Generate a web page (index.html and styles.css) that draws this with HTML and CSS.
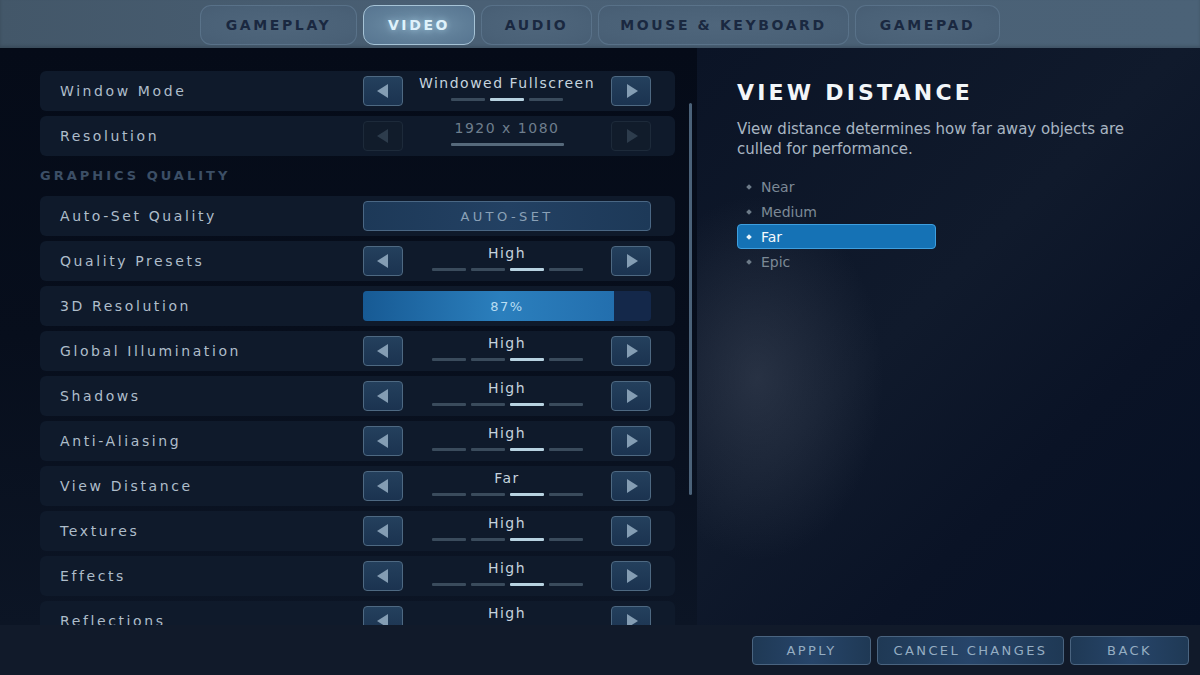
FILE: index.html
```html
<!DOCTYPE html>
<html>
<head>
    <title>Video Settings</title>
    <link rel="stylesheet" href="styles.css">
</head>
<body>
<div class="screen">
    <div class="tabs">
        <div class="tab tab-gameplay">GAMEPLAY</div>
        <div class="tab tab-video active">VIDEO</div>
        <div class="tab tab-audio">AUDIO</div>
        <div class="tab tab-mk">MOUSE &amp; KEYBOARD</div>
        <div class="tab tab-pad">GAMEPAD</div>
    </div>

    <div class="main">
        <div class="settings">
            <div class="list">
                <div class="row">
                    <span class="label">Window Mode</span>
                    <div class="picker">
                        <div class="arrow left"></div>
                        <div class="value">
                            <span>Windowed Fullscreen</span>
                            <div class="ticks"><i></i><i class="on"></i><i></i></div>
                        </div>
                        <div class="arrow right"></div>
                    </div>
                </div>
                <div class="row">
                    <span class="label">Resolution</span>
                    <div class="picker disabled">
                        <div class="arrow left"></div>
                        <div class="value">
                            <span>1920 x 1080</span>
                            <div class="ticks"><i class="full"></i></div>
                        </div>
                        <div class="arrow right"></div>
                    </div>
                </div>

                <div class="section">GRAPHICS QUALITY</div>

                <div class="row">
                    <span class="label">Auto-Set Quality</span>
                    <div class="autoset">AUTO-SET</div>
                </div>
                <div class="row">
                    <span class="label">Quality Presets</span>
                    <div class="picker">
                        <div class="arrow left"></div>
                        <div class="value">
                            <span>High</span>
                            <div class="ticks"><i></i><i></i><i class="on"></i><i></i></div>
                        </div>
                        <div class="arrow right"></div>
                    </div>
                </div>
                <div class="row">
                    <span class="label">3D Resolution</span>
                    <div class="slider">
                        <div class="fill" style="width: 87%"></div>
                        <span>87%</span>
                    </div>
                </div>
                <div class="row">
                    <span class="label">Global Illumination</span>
                    <div class="picker">
                        <div class="arrow left"></div>
                        <div class="value">
                            <span>High</span>
                            <div class="ticks"><i></i><i></i><i class="on"></i><i></i></div>
                        </div>
                        <div class="arrow right"></div>
                    </div>
                </div>
                <div class="row">
                    <span class="label">Shadows</span>
                    <div class="picker">
                        <div class="arrow left"></div>
                        <div class="value">
                            <span>High</span>
                            <div class="ticks"><i></i><i></i><i class="on"></i><i></i></div>
                        </div>
                        <div class="arrow right"></div>
                    </div>
                </div>
                <div class="row">
                    <span class="label">Anti-Aliasing</span>
                    <div class="picker">
                        <div class="arrow left"></div>
                        <div class="value">
                            <span>High</span>
                            <div class="ticks"><i></i><i></i><i class="on"></i><i></i></div>
                        </div>
                        <div class="arrow right"></div>
                    </div>
                </div>
                <div class="row">
                    <span class="label">View Distance</span>
                    <div class="picker">
                        <div class="arrow left"></div>
                        <div class="value">
                            <span>Far</span>
                            <div class="ticks"><i></i><i></i><i class="on"></i><i></i></div>
                        </div>
                        <div class="arrow right"></div>
                    </div>
                </div>
                <div class="row">
                    <span class="label">Textures</span>
                    <div class="picker">
                        <div class="arrow left"></div>
                        <div class="value">
                            <span>High</span>
                            <div class="ticks"><i></i><i></i><i class="on"></i><i></i></div>
                        </div>
                        <div class="arrow right"></div>
                    </div>
                </div>
                <div class="row">
                    <span class="label">Effects</span>
                    <div class="picker">
                        <div class="arrow left"></div>
                        <div class="value">
                            <span>High</span>
                            <div class="ticks"><i></i><i></i><i class="on"></i><i></i></div>
                        </div>
                        <div class="arrow right"></div>
                    </div>
                </div>
                <div class="row">
                    <span class="label">Reflections</span>
                    <div class="picker">
                        <div class="arrow left"></div>
                        <div class="value">
                            <span>High</span>
                            <div class="ticks"><i></i><i></i><i class="on"></i><i></i></div>
                        </div>
                        <div class="arrow right"></div>
                    </div>
                </div>
            </div>
            <div class="scrollbar"></div>
        </div>

        <div class="info">
            <h2>VIEW DISTANCE</h2>
            <p>View distance determines how far away objects are culled for performance.</p>
            <ul class="options">
                <li>Near</li>
                <li>Medium</li>
                <li class="selected">Far</li>
                <li>Epic</li>
            </ul>
        </div>
    </div>

    <div class="footer">
        <div class="btn btn-apply">APPLY</div>
        <div class="btn btn-cancel">CANCEL CHANGES</div>
        <div class="btn btn-back">BACK</div>
    </div>
</div>
</body>
</html>
```

FILE: styles.css
```css
body {
    margin: 0;
    background: #050b18;
    font-family: "DejaVu Sans", "Liberation Sans", sans-serif;
    overflow: hidden;
}
.screen {
    width: 1200px;
    height: 675px;
    display: flex;
    flex-direction: column;
    background: #050b18;
}

/* tabs */
.tabs {
    height: 48px;
    box-sizing: border-box;
    display: flex;
    gap: 6px;
    padding: 5px 0 0 200px;
    background: linear-gradient(90deg, #435769 0%, #4a6075 40%, #4b6277 100%);
    box-shadow: inset 0 -2px 3px rgba(0,0,0,0.15);
}
.tab {
    height: 40px;
    box-sizing: border-box;
    display: flex;
    align-items: center;
    justify-content: center;
    border: 1px solid rgba(120,150,175,0.35);
    border-radius: 11px;
    background: radial-gradient(ellipse at center, #4f667c 0%, #4a6177 70%, #475d73 100%);
    color: #1a2840;
    font-size: 14px;
    font-weight: bold;
    letter-spacing: 2.6px;
}
.tab-gameplay { width: 157px; }
.tab-video { width: 112px; }
.tab-audio { width: 111px; }
.tab-mk { width: 251px; }
.tab-pad { width: 145px; }
.tab.active {
    background: radial-gradient(ellipse at center, #7595ae 0%, #5f7e98 60%, #567490 100%);
    border: 1px solid #a6c3d6;
    color: #dff2fb;
    text-shadow: 0 0 6px rgba(180,225,245,0.6);
}

/* main area */
.main {
    flex: 1;
    display: flex;
    min-height: 0;
}
.settings {
    width: 697px;
    display: flex;
    padding: 23px 0 0 40px;
    box-sizing: border-box;
    overflow: hidden;
    background: linear-gradient(180deg, #050b18 0%, #070e1c 50%, #0c1525 100%);
}
.list {
    width: 635px;
    flex-shrink: 0;
}
.scrollbar {
    width: 3px;
    height: 392px;
    margin: 32px 0 0 14px;
    border-radius: 2px;
    background: #4b6279;
}
.row {
    height: 40px;
    margin-bottom: 5px;
    display: flex;
    align-items: center;
    justify-content: space-between;
    padding: 0 24px 0 20px;
    border-radius: 6px;
    background: #0f1a2b;
}
.label {
    color: #aebdca;
    font-size: 14px;
    letter-spacing: 2.6px;
}
.section {
    height: 35px;
    box-sizing: border-box;
    padding-bottom: 6px;
    display: flex;
    align-items: center;
    color: #3c4f66;
    font-size: 13px;
    font-weight: bold;
    letter-spacing: 3px;
}

/* arrow pickers */
.picker {
    width: 288px;
    height: 30px;
    display: flex;
    justify-content: space-between;
}
.arrow {
    width: 40px;
    height: 30px;
    box-sizing: border-box;
    display: flex;
    align-items: center;
    justify-content: center;
    border: 1px solid #4e6982;
    border-radius: 4px;
    background: linear-gradient(180deg, #24405d 0%, #1b3350 100%);
}
.arrow::before {
    content: "";
    border-top: 7px solid transparent;
    border-bottom: 7px solid transparent;
}
.arrow.left::before {
    border-right: 11px solid #849db3;
    margin-right: 2px;
}
.arrow.right::before {
    border-left: 11px solid #849db3;
    margin-left: 2px;
}
.value {
    flex: 1;
    display: flex;
    flex-direction: column;
    align-items: center;
    color: #c5d3de;
    font-size: 14px;
    letter-spacing: 1.5px;
}
.value span {
    line-height: 20px;
    margin-top: -3px;
}
.ticks {
    display: flex;
    gap: 5px;
    margin-top: 5px;
}
.ticks i {
    width: 34px;
    height: 3px;
    border-radius: 1px;
    background: #3a4b5c;
}
.ticks i.on {
    background: #b7d2e0;
}
.ticks i.full {
    width: 113px;
    background: #56697b;
}
.picker.disabled .arrow {
    background: #111c2b;
    border-color: #1d2a3a;
}
.picker.disabled .arrow.left::before {
    border-right-color: #2d3c4c;
}
.picker.disabled .arrow.right::before {
    border-left-color: #2d3c4c;
}
.picker.disabled .value {
    color: #6e7e8d;
}

.autoset {
    width: 288px;
    height: 30px;
    box-sizing: border-box;
    display: flex;
    align-items: center;
    justify-content: center;
    border: 1px solid #4a6784;
    border-radius: 4px;
    background: linear-gradient(90deg, #1d3958 0%, #234163 50%, #1d3958 100%);
    color: #8aa1b7;
    font-size: 13px;
    letter-spacing: 3.4px;
}
.slider {
    width: 288px;
    height: 30px;
    position: relative;
    display: flex;
    align-items: center;
    justify-content: center;
    border-radius: 4px;
    background: #14284a;
    overflow: hidden;
}
.slider .fill {
    position: absolute;
    left: 0;
    top: 0;
    bottom: 0;
    background: linear-gradient(90deg, #175a94 0%, #2b7fbd 55%, #236fae 100%);
}
.slider span {
    position: relative;
    color: #b9ddf2;
    font-size: 13px;
    letter-spacing: 1.5px;
}

/* info panel */
.info {
    flex: 1;
    padding: 30px 40px 0 40px;
    background:
        radial-gradient(ellipse 180px 260px at 60px 330px, rgba(70,80,98,0.45), transparent 70%),
        linear-gradient(135deg, #0b1426 0%, #101a2c 45%, #0a1326 70%, #061024 100%);
}
.info h2 {
    margin: 0;
    color: #f2f6f9;
    font-size: 22px;
    font-weight: bold;
    letter-spacing: 3.2px;
    line-height: 30px;
}
.info p {
    margin: 11px 0 0 0;
    color: #a8b5c2;
    font-size: 15px;
    line-height: 20px;
}
.options {
    list-style: none;
    margin: 15px 0 0 0;
    padding: 0;
}
.options li {
    width: 199px;
    height: 25px;
    box-sizing: border-box;
    display: flex;
    align-items: center;
    padding-left: 9px;
    color: #7c8996;
    font-size: 14px;
    border: 1px solid transparent;
    border-radius: 4px;
}
.options li::before {
    content: "";
    width: 4px;
    height: 4px;
    margin-right: 10px;
    background: #6d7b89;
    transform: rotate(45deg);
}
.options li.selected {
    background: #1572b5;
    border-color: #3e9fdf;
    color: #f4f9fc;
}
.options li.selected::before {
    background: #e8f4fb;
}

/* footer */
.footer {
    height: 50px;
    flex-shrink: 0;
    display: flex;
    justify-content: flex-end;
    align-items: center;
    gap: 6px;
    padding-right: 11px;
    background: #111a2a;
}
.btn {
    height: 29px;
    box-sizing: border-box;
    display: flex;
    align-items: center;
    justify-content: center;
    border: 1px solid #4a6480;
    border-radius: 4px;
    background: linear-gradient(90deg, #1f3955 0%, #27456a 50%, #1f3955 100%);
    color: #95adc2;
    font-size: 13px;
    letter-spacing: 2.4px;
}
.btn-apply { width: 119px; }
.btn-cancel { width: 187px; }
.btn-back { width: 119px; }
```
